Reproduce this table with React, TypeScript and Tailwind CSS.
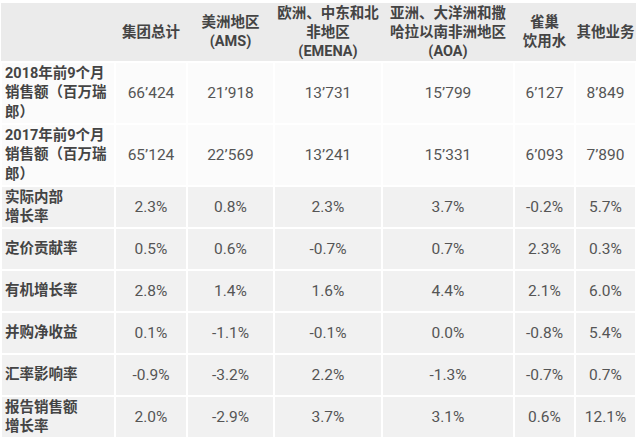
const headers = [
  '',
  '集团总计',
  '美洲地区\n(AMS)',
  '欧洲、中东和北\n非地区\n(EMENA)',
  '亚洲、大洋洲和撒\n哈拉以南非洲地区\n(AOA)',
  '雀巢\n饮用水',
  '其他业务',
];

const rows: { label: string; values: string[]; tall?: boolean; light?: boolean }[] = [
  { label: '2018年前9个月\n销售额（百万瑞\n郎）', values: ['66’424', '21’918', '13’731', '15’799', '6’127', '8’849'], tall: true, light: true },
  { label: '2017年前9个月\n销售额（百万瑞\n郎）', values: ['65’124', '22’569', '13’241', '15’331', '6’093', '7’890'], tall: true, light: true },
  { label: '实际内部\n增长率', values: ['2.3%', '0.8%', '2.3%', '3.7%', '-0.2%', '5.7%'] },
  { label: '定价贡献率', values: ['0.5%', '0.6%', '-0.7%', '0.7%', '2.3%', '0.3%'] },
  { label: '有机增长率', values: ['2.8%', '1.4%', '1.6%', '4.4%', '2.1%', '6.0%'] },
  { label: '并购净收益', values: ['0.1%', '-1.1%', '-0.1%', '0.0%', '-0.8%', '5.4%'] },
  { label: '汇率影响率', values: ['-0.9%', '-3.2%', '2.2%', '-1.3%', '-0.7%', '0.7%'] },
  { label: '报告销售额\n增长率', values: ['2.0%', '-2.9%', '3.7%', '3.1%', '0.6%', '12.1%'] },
];

const widths = ['w-[114px]', 'w-[72px]', 'w-[87px]', 'w-[108px]', 'w-[132px]', 'w-[61px]', 'w-[61px]'];

export default function App() {
  return (
    <div className="w-[640px] h-[438px] bg-white pt-[3px] overflow-hidden" style={{ fontFamily: "Roboto, 'Noto Sans CJK SC', sans-serif" }}>
      <table className="w-[635px] table-fixed border-collapse">
        <colgroup>
          {widths.map((w, i) => (
            <col key={i} className={w} />
          ))}
        </colgroup>
        <thead>
          <tr className="h-[59px] bg-[#ebebeb]">
            {headers.map((h, i) => (
              <th key={i} className="p-0 text-center align-middle font-bold text-[14.5px] leading-[19px] text-[#444] whitespace-pre-line">
                {h}
              </th>
            ))}
          </tr>
        </thead>
        <tbody>
          {rows.map((r, ri) => (
            <tr key={ri} className={r.tall ? 'h-[62px]' : 'h-[42px]'}>
              <td className={`border-2 border-white pl-[3px] pr-0 py-0 align-middle font-bold text-[14.5px] leading-[19.5px] text-[#444] whitespace-pre-line ${r.light ? 'bg-[#fbfbfb]' : 'bg-[#f1f1f1]'}`}>
                {r.label}
              </td>
              {r.values.map((v, vi) => (
                <td key={vi} className={`border-2 border-white p-0 text-center align-middle text-[15.5px] leading-[19px] text-[#555] ${r.light ? 'bg-[#fbfbfb]' : 'bg-[#f1f1f1]'}`}>
                  {v}
                </td>
              ))}
            </tr>
          ))}
        </tbody>
      </table>
    </div>
  );
}
